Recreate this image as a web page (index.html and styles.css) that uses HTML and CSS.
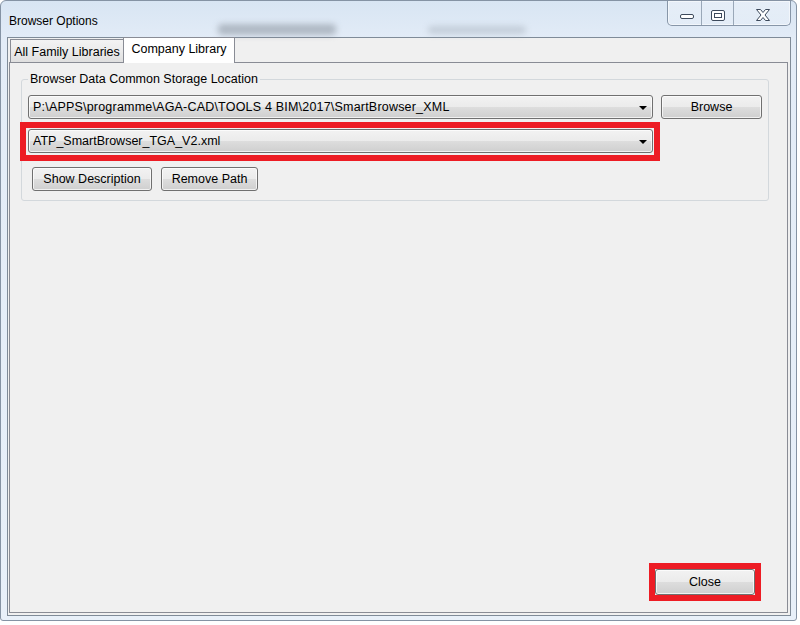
FILE: index.html
```html
<!DOCTYPE html>
<html>
<head>
<meta charset="utf-8">
<title>Browser Options</title>
<link rel="stylesheet" href="styles.css">
</head>
<body>
<div class="window">
  <div class="titlebar">
    <span class="title">Browser Options</span>
    <div class="blur blur-a"></div>
    <div class="blur blur-b"></div>
    <div class="caption-buttons">
      <div class="cap cap-min">
        <svg width="33" height="24" viewBox="0 0 33 24"><rect x="12.5" y="13.5" width="13" height="4" rx="1.5" fill="#fff" stroke="#3d4a5c"/></svg>
      </div>
      <div class="cap cap-max">
        <svg width="31" height="24" viewBox="0 0 31 24"><rect x="9.5" y="9.5" width="13" height="10" rx="1.5" fill="#fff" stroke="#3d4a5c"/><rect x="12.5" y="12.5" width="7" height="4" fill="#fff" stroke="#3d4a5c"/></svg>
      </div>
      <div class="cap cap-close">
        <svg width="56" height="24" viewBox="0 0 56 24"><path d="M22.5 8.5h4l2.5 3 2.5-3h4l-4.5 5.5 4.5 5.5h-4l-2.5-3-2.5 3h-4l4.5-5.5z" fill="#fff" stroke="#3d4a5c" stroke-linejoin="round"/></svg>
      </div>
    </div>
  </div>
  <div class="client">
    <div class="tabs">
      <div class="tab">All Family Libraries</div>
      <div class="tab tab-active">Company Library</div>
    </div>
    <div class="tabpage">
      <fieldset class="group">
        <legend class="group-title">Browser Data Common Storage Location</legend>
        <div class="row row-path">
          <div class="combo combo-wide"><span class="combo-text path-text">P:\APPS\programme\AGA-CAD\TOOLS 4 BIM\2017\SmartBrowser_XML</span><span class="arrow"></span></div>
          <div class="btn btn-browse">Browse</div>
        </div>
        <div class="row row-file">
          <div class="mark mark-combo">
            <div class="combo combo-fixed"><span class="combo-text">ATP_SmartBrowser_TGA_V2.xml</span><span class="arrow"></span></div>
          </div>
        </div>
        <div class="row row-actions">
          <div class="btn btn-desc">Show Description</div>
          <div class="btn btn-remove">Remove Path</div>
        </div>
      </fieldset>
      <div class="footer">
        <div class="mark mark-close">
          <div class="btn btn-close">Close</div>
        </div>
      </div>
    </div>
  </div>
</div>
</body>
</html>
```
FILE: styles.css
```css
html, body {
  margin: 0;
  padding: 0;
  background: #ffffff;
}

body {
  font-family: "Liberation Sans", Arial, sans-serif;
  font-size: 12.5px;
  color: #000;
}

.window {
  box-sizing: border-box;
  width: 797px;
  height: 621px;
  border: 1px solid #8593a4;
  border-radius: 6px 6px 3px 3px;
  background: linear-gradient(180deg, #d8e5f3 0%, #e3ecf7 40px, #e8f0f9 100%);
  padding: 0 5px 4px 6px;
  display: flex;
  flex-direction: column;
}

.titlebar {
  height: 36px;
  flex: none;
  display: flex;
  align-items: flex-start;
}

.title {
  font-size: 12px;
  line-height: 14px;
  margin-top: 13px;
  margin-left: 2px;
  white-space: nowrap;
}

.blur {
  flex: none;
  border-radius: 4px;
  filter: blur(3px);
}

.blur-a {
  width: 118px;
  height: 11px;
  margin-top: 23px;
  margin-left: 120px;
  background: #7f8892;
  opacity: 0.5;
}

.blur-b {
  width: 98px;
  height: 8px;
  margin-top: 25px;
  margin-left: 92px;
  background: #98a2ad;
  opacity: 0.4;
}

.caption-buttons {
  margin-left: auto;
  display: flex;
  height: 24px;
  border: 1px solid #8796a8;
  border-top: none;
  border-radius: 0 0 5px 5px;
  background: linear-gradient(180deg, rgba(255,255,255,0.35), rgba(255,255,255,0.15));
  box-shadow: inset 0 0 0 1px rgba(255,255,255,0.5);
}

.cap {
  height: 24px;
  display: flex;
}

.cap-min {
  width: 33px;
  border-right: 1px solid #9aa8b8;
}

.cap-max {
  width: 31px;
  border-right: 1px solid #9aa8b8;
}

.cap-close {
  width: 56px;
}

.client {
  flex: 1;
  display: flex;
  flex-direction: column;
  border: 1px solid #7f8b98;
  background: #f0f0f0;
  padding: 0 2px 2px 1px;
}

.tabs {
  height: 24px;
  flex: none;
  display: flex;
  align-items: flex-end;
  padding-left: 1px;
}

.tab {
  box-sizing: border-box;
  height: 23px;
  width: 114px;
  border: 1px solid #898c95;
  border-bottom: none;
  background: linear-gradient(180deg, #f3f3f3 0%, #ebebeb 50%, #dfdfdf 100%);
  text-align: center;
  line-height: 15px;
  padding-top: 5px;
  white-space: nowrap;
}

.tab-active {
  position: relative;
  z-index: 1;
  width: 112px;
  height: 26px;
  margin-bottom: -1px;
  margin-left: -1px;
  background: #ffffff;
  padding-top: 4px;
}

.tabpage {
  flex: 1;
  display: flex;
  flex-direction: column;
  border: 1px solid #898c95;
  background: #f0f0f0;
}

.group {
  margin: 9px 18px 0 11px;
  padding: 8px 6px 9px 6px;
  border: 1px solid #d3d8dc;
  border-radius: 3px;
  min-width: 0;
}

.group-title {
  padding: 0 2px;
  margin-left: 0;
  line-height: 15px;
  white-space: nowrap;
}

.row {
  display: flex;
  align-items: center;
}

.row-path {
  gap: 8px;
}

.row-file {
  margin-top: 10px;
}

.row-actions {
  margin-top: 14px;
  gap: 9px;
  padding-left: 4px;
}

.combo,
.btn {
  box-sizing: border-box;
  border: 1px solid #707070;
  border-radius: 3px;
  background: linear-gradient(180deg, #f2f2f2 0%, #ebebeb 50%, #dddddd 51%, #cfcfcf 100%);
  box-shadow: inset 0 0 0 1px rgba(255,255,255,0.7);
  white-space: nowrap;
  line-height: 15px;
}

.combo {
  height: 24px;
  display: flex;
  align-items: center;
  padding: 0 5px 0 4px;
}

.combo-wide {
  flex: 1;
}

.combo-fixed {
  width: 625px;
  height: 24px;
}

.combo-text {
  flex: 1;
  overflow: hidden;
}

.path-text {
  letter-spacing: 0.2px;
}

.arrow {
  flex: none;
  width: 0;
  height: 0;
  border-left: 4px solid transparent;
  border-right: 4px solid transparent;
  border-top: 4px solid #000;
  margin-top: 2px;
}

.btn {
  height: 24px;
  display: flex;
  align-items: center;
  justify-content: center;
}

.btn-browse {
  width: 101px;
  flex: none;
}

.btn-desc {
  width: 120px;
}

.btn-remove {
  width: 97px;
}

.mark {
  border: 6px solid #ed1c24;
}

.mark-combo {
  padding: 1px 1px 2px 2px;
  margin: -7px 0 -8px -8px;
}

.mark-close {
  margin: -6px;
}

.footer {
  margin-top: auto;
  display: flex;
  justify-content: flex-end;
  padding: 0 32px 17px 0;
}

.btn-close {
  width: 100px;
  height: 26px;
}
```
